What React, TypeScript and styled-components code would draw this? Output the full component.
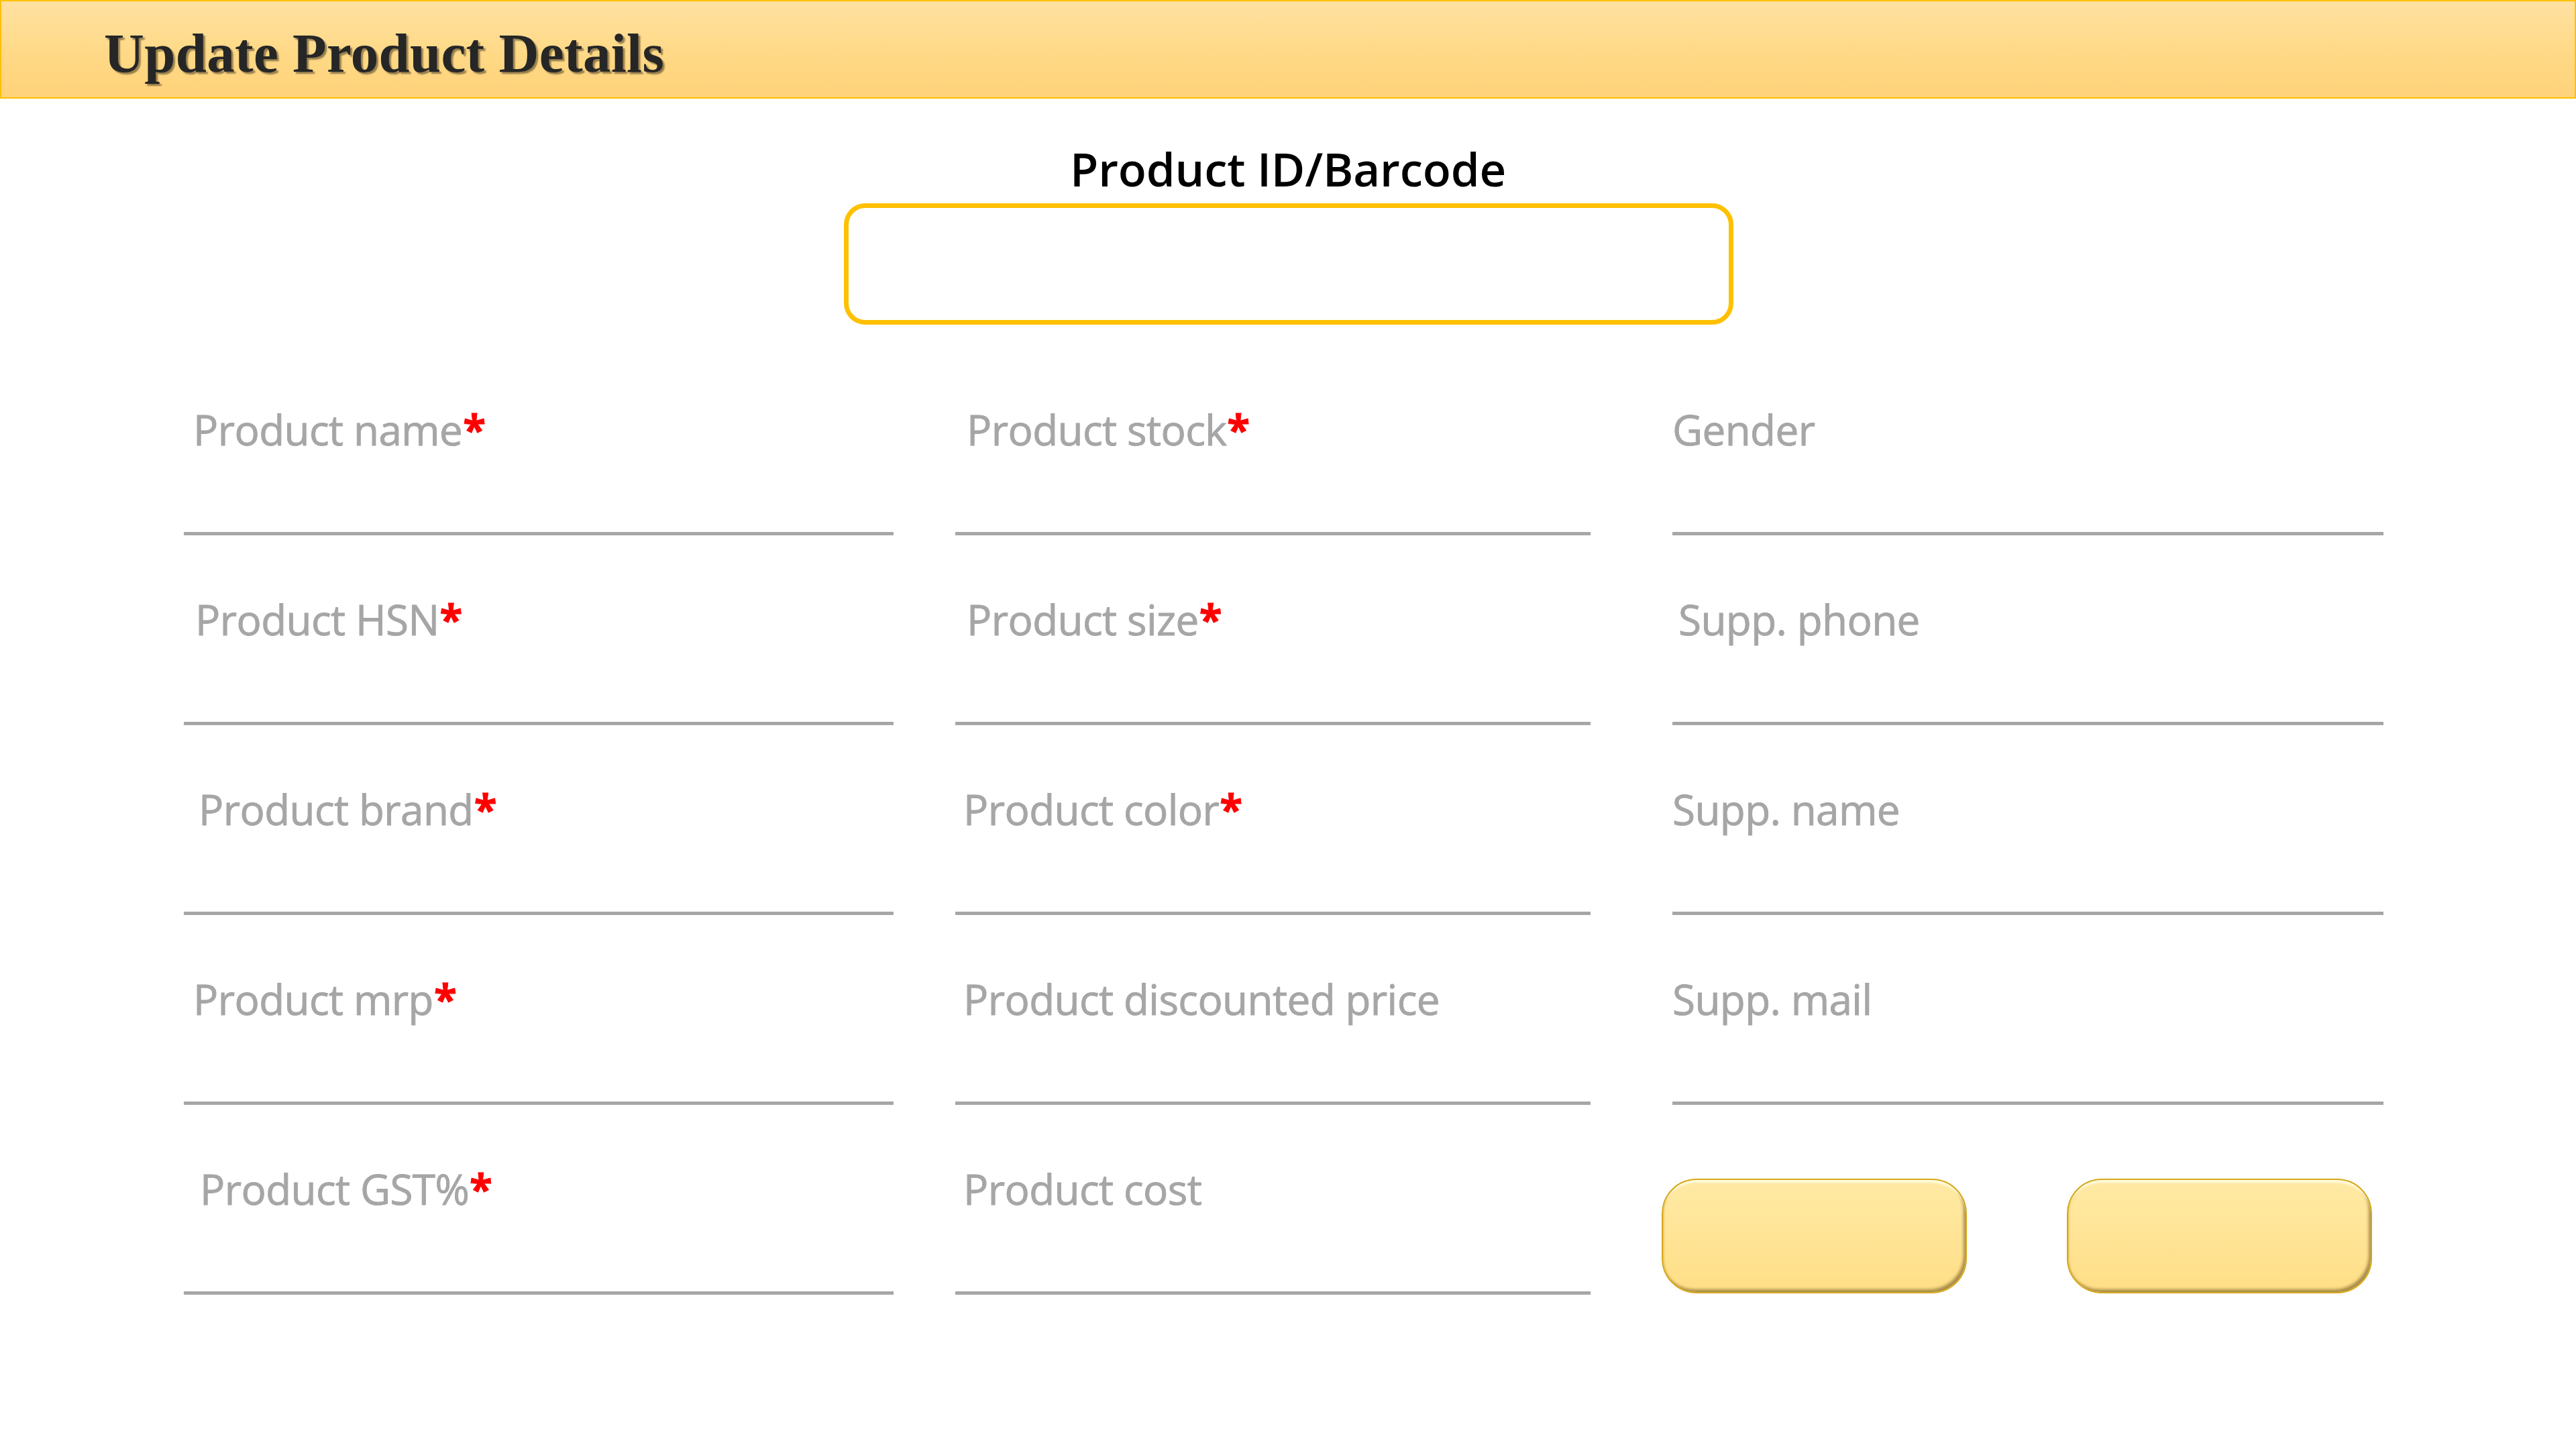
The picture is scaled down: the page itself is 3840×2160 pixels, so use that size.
import React from "react";
import styled, { createGlobalStyle } from "styled-components";

const Global = createGlobalStyle`
  html, body { margin: 0; padding: 0; background: #ffffff; }
  body { width: 3840px; height: 2160px; overflow: hidden; font-family: "Open Sans", "Noto Sans", sans-serif; }
  * { box-sizing: border-box; }
`;

const Page = styled.div`
  width: 3840px;
  height: 2160px;
  display: flex;
  flex-direction: column;
  background: #ffffff;
`;

const Header = styled.header`
  height: 147px;
  border: 2px solid #ffc000;
  background: linear-gradient(180deg, #ffe1a1 0%, #ffd986 55%, #ffd27a 100%);
  padding: 32px 0 0 153px;
`;

const Title = styled.h1`
  margin: 0;
  font-family: "Liberation Serif", "Times New Roman", serif;
  font-weight: 700;
  font-size: 83px;
  line-height: 90px;
  letter-spacing: 0.3px;
  color: #262626;
  text-shadow: 3px 3px 2px rgba(0, 0, 0, 0.42);
`;

const IdSection = styled.section`
  display: flex;
  flex-direction: column;
  align-items: center;
  margin-top: 58px;
  gap: 6px;
`;

const IdLabel = styled.label`
  font-family: "Open Sans", "Noto Sans", sans-serif;
  font-weight: 600;
  font-size: 69px;
  line-height: 92px;
  letter-spacing: -0.2px;
  color: #000000;
`;

const IdInput = styled.input`
  width: 1326px;
  height: 181px;
  border: 7px solid #ffc000;
  border-radius: 32px;
  background: #ffffff;
  outline: none;
  font-size: 60px;
  padding: 0 30px;
  margin-left: 2px;
`;

const Columns = styled.div`
  display: flex;
  margin-top: 114px;
  padding-left: 274px;
`;

const Column = styled.div<{ $track: number }>`
  width: ${(p) => p.$track}px;
  display: flex;
  flex-direction: column;
  gap: 83px;
`;

const Field = styled.div<{ $width: number }>`
  width: ${(p) => p.$width}px;
  height: 200px;
  display: flex;
  flex-direction: column;
`;

const Label = styled.label<{ $indent: number }>`
  display: block;
  height: 84px;
  padding-left: ${(p) => p.$indent}px;
  font-family: "Open Sans", "Noto Sans", sans-serif;
  font-weight: 400;
  font-size: 62px;
  line-height: 84px;
  letter-spacing: -0.6px;
  color: #a6a6a6;
  -webkit-text-stroke: 0.9px #a6a6a6;
  white-space: nowrap;
`;

const Star = styled.span`
  color: #ff0000;
  -webkit-text-stroke: 0.9px #ff0000;
  font-weight: 700;
  margin-left: 1px;
`;

const Line = styled.input`
  display: block;
  width: 100%;
  height: 116px;
  border: none;
  border-bottom: 5px solid #a6a6a6;
  background: transparent;
  outline: none;
  font-size: 56px;
`;

const ButtonRow = styled.div`
  display: flex;
  gap: 149px;
  margin: 27px 0 0 -16px;
`;

const GoldButton = styled.button`
  width: 455px;
  height: 171px;
  border-radius: 52px;
  border: 2px solid #d6a81c;
  background: linear-gradient(180deg, #ffeaa4 0%, #ffe496 50%, #ffdf86 100%);
  box-shadow:
    inset 0 7px 3px -3px rgba(255, 252, 225, 0.95),
    inset -4px -5px 4px -1px rgba(110, 85, 30, 0.6),
    inset 3px 0 3px -2px rgba(200, 150, 20, 0.6);
  cursor: pointer;
`;

type F = { label: string; req?: boolean; indent: number };

const col1: F[] = [
  { label: "Product name", req: true, indent: 14 },
  { label: "Product HSN", req: true, indent: 17 },
  { label: "Product brand", req: true, indent: 22 },
  { label: "Product mrp", req: true, indent: 14 },
  { label: "Product GST%", req: true, indent: 24 },
];
const col2: F[] = [
  { label: "Product stock", req: true, indent: 17 },
  { label: "Product size", req: true, indent: 17 },
  { label: "Product color", req: true, indent: 12 },
  { label: "Product discounted price", indent: 12 },
  { label: "Product cost", indent: 12 },
];
const col3: F[] = [
  { label: "Gender", indent: -2 },
  { label: "Supp. phone", indent: 9 },
  { label: "Supp. name", indent: -2 },
  { label: "Supp. mail", indent: -2 },
];

const FieldView = ({ f, width }: { f: F; width: number }) => (
  <Field $width={width}>
    <Label $indent={f.indent}>
      {f.label}
      {f.req && <Star>*</Star>}
    </Label>
    <Line aria-label={f.label} />
  </Field>
);

export default function App() {
  return (
    <Page>
      <Global />
      <Header>
        <Title>Update Product Details</Title>
      </Header>
      <IdSection>
        <IdLabel>Product ID/Barcode</IdLabel>
        <IdInput aria-label="Product ID/Barcode" />
      </IdSection>
      <Columns>
        <Column $track={1150}>
          {col1.map((f) => (
            <FieldView key={f.label} f={f} width={1058} />
          ))}
        </Column>
        <Column $track={1069}>
          {col2.map((f) => (
            <FieldView key={f.label} f={f} width={947} />
          ))}
        </Column>
        <Column $track={1060}>
          {col3.map((f) => (
            <FieldView key={f.label} f={f} width={1060} />
          ))}
          <ButtonRow>
            <GoldButton aria-label="Update" />
            <GoldButton aria-label="Cancel" />
          </ButtonRow>
        </Column>
      </Columns>
    </Page>
  );
}
